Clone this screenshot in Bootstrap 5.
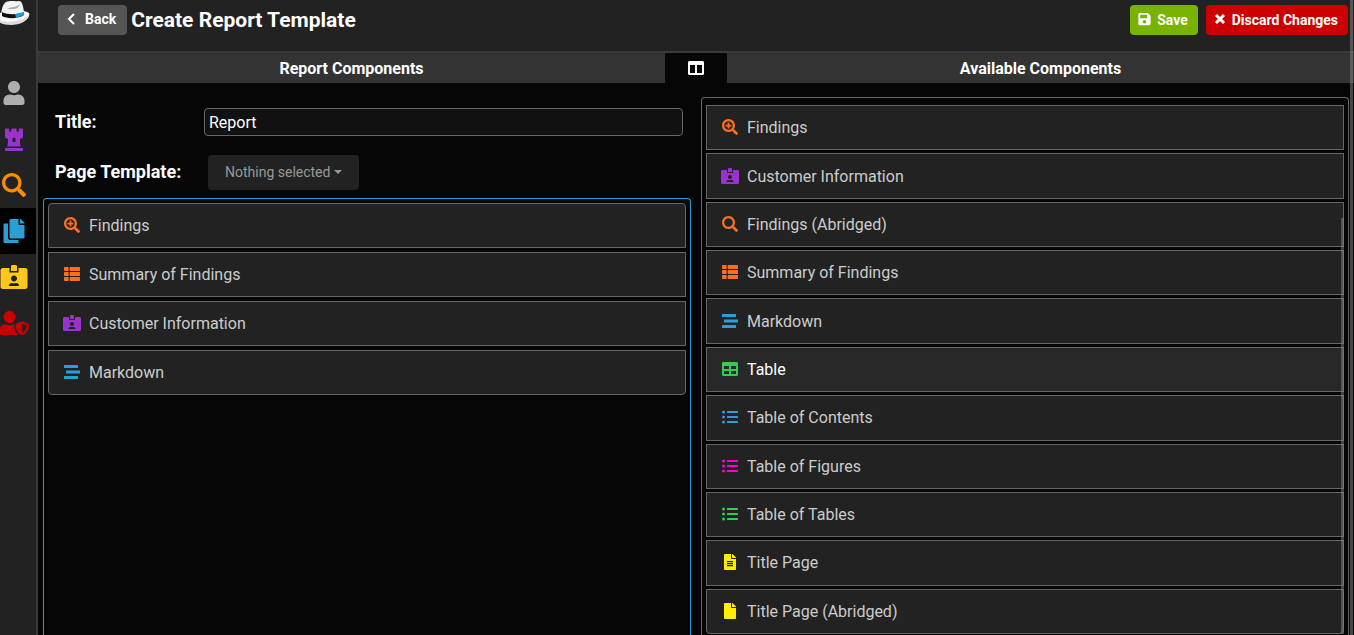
<!DOCTYPE html>
<html lang="en">
<head>
<meta charset="utf-8">
<meta name="viewport" content="width=device-width, initial-scale=1">
<title>Create Report Template</title>
<link href="https://cdn.jsdelivr.net/npm/bootstrap@5.3.0/dist/css/bootstrap.min.css" rel="stylesheet">
<style>
  body { background: #060606; color: #fff; font-family: Roboto, "Liberation Sans", sans-serif; font-size: 16px; }
  svg { fill: currentColor; display: block; flex: none; }

  .side-menu { width: 38px; background: #222; border-right: 2px solid #3a3a3a; }
  .side-logo { height: 70px; }
  .side-link { height: 46px; padding-left: 0; color: inherit; width: 28px; }
  .side-item.current { background: #000; }

  .page-head { height: 53px; background: #222; border-bottom: 2px solid #3a3a3a; padding: 5px 6px 0 20px; }
  .page-head .btn { height: 30px; padding: 0 10px; font-size: 14px; font-weight: 700; color: #fff; border: 0; border-radius: 4px; }
  .page-head .btn-back { background: #555; padding: 0 11px 2px 8px; gap: 10px; }
  .btn-save { background: #77b300; }
  .page-head .btn-save { padding: 0 10px 0 8px; gap: 6px; }
  .btn-discard { background: #c00; }
  .page-head .btn-save svg, .page-head .btn-discard svg { margin-bottom: 2px; }
  .page-head h1 { font-size: 21px; line-height: 30px; font-weight: 700; }

  .col-tabs { height: 30px; line-height: 30px; }
  .col-tab { background: #333; font-size: 16px; line-height: 32px; font-weight: 700; }
  .layout-toggle { width: 62px; background: transparent; border: 0; color: #fff; }

  .form-line { padding-left: 12px; padding-right: 8px; }
  .form-line label { font-size: 18px; line-height: 28px; font-weight: 700; flex: none; }
  .title-line { padding-top: 25px; }
  .title-line label { width: 149px; }
  .title-input { height: 28px; padding: 0 4px; font-size: 16px; background: #111; color: #fff; border: 1px solid #666; border-radius: 4px; }
  .title-input:focus { background: #111; color: #fff; }
  .template-line { padding-top: 19px; padding-bottom: 8px; }
  .template-line label { width: 153px; padding-bottom: 2px; }
  .btn-template { height: 35px; padding: 0 17px; font-size: 14px; background: #222; color: #999; border: 0; border-radius: 4px; }
  .btn-template::after { margin-left: 4px; vertical-align: 3px; border-top-width: 4px; border-left-width: 4px; border-right-width: 4px; }

  .split { --bs-gutter-x: 10px; }
  .drop-area { border: 1px solid #666; border-bottom: 0; border-radius: 4px 4px 0 0; }
  .drop-report { border-color: #2a9fd6; padding: 4px; }
  .drop-available { margin-top: 14px; padding: 7px 4px 1px; }
  .parts { gap: 4px; }
  .part { min-height: 45px; padding: 0 13px; gap: 7px; background: #222; color: #ccc; border: 1px solid #666; cursor: move; }
  .part svg { margin-bottom: 2px; }
  .parts-report .part:first-child { border-radius: 4px 4px 0 0; }
  .part:last-child { border-radius: 0 0 4px 4px; }
  .parts-available { gap: 3px; }
  .parts-available .part { flex: 1 0 auto; padding-top: 1px; }
  .part.hovered { background: #282828; color: #fff; }

  .c-orange { color: #fd6f20; } .c-purple { color: #93c; } .c-blue { color: #2a9fd6; }
  .c-green { color: #3c5; } .c-pink { color: #f0c; } .c-yellow { color: #fe0; }
  .c-user { color: #adafae; } .c-search { color: #ff8c00; } .c-card { color: #ffc61c; } .c-red { color: #c00; }

  .thumb { background: #888; opacity: .5; width: 3px; pointer-events: none; }
  .thumb-page { top: 0; right: 1px; height: 100%; }
  .thumb-list { top: 120px; right: 4px; bottom: 1px; }
</style>
</head>
<body>
<svg class="d-none" aria-hidden="true">
  <symbol id="user" viewBox="0 0 448 512"><path d="M224 256c70.700 0 128-57.300 128-128S294.700 0 224 0 96 57.300 96 128s57.300 128 128 128zm89.600 32h-16.700c-22.200 10.200-46.900 16-72.900 16s-50.600-5.800-72.900-16h-16.700C60.200 288 0 348.200 0 422.400V464c0 26.500 21.500 48 48 48h352c26.500 0 48-21.500 48-48v-41.600c0-74.200-60.200-134.400-134.400-134.400z"/></symbol>
  <symbol id="rook" viewBox="0 0 384 512"><path d="M368 32h-56a16 16 0 0 0-16 16v48h-48V48a16 16 0 0 0-16-16h-80a16 16 0 0 0-16 16v48H88.100V48a16 16 0 0 0-16-16H16A16 16 0 0 0 0 48v176l64 32c0 48.330-1.540 95-13.210 160h282.420C321.540 351 320 303.720 320 256l64-32V48a16 16 0 0 0-16-16zM224 320h-64v-64a32 32 0 0 1 64 0zm144 128H16a16 16 0 0 0-16 16v32a16 16 0 0 0 16 16h352a16 16 0 0 0 16-16v-32a16 16 0 0 0-16-16z"/></symbol>
  <symbol id="search" viewBox="0 0 512 512"><path d="M505 442.700L405.300 343c-4.500-4.500-10.600-7-17-7H372c27.600-35.300 44-79.700 44-128C416 93.100 322.900 0 208 0S0 93.100 0 208s93.100 208 208 208c48.300 0 92.700-16.400 128-44v16.300c0 6.400 2.500 12.500 7 17l99.700 99.700c9.400 9.400 24.600 9.400 33.900 0l28.300-28.300c9.400-9.400 9.400-24.600.1-34zM208 346c-76 0-138-62-138-138S132 70 208 70s138 62 138 138-62 138-138 138z"/></symbol>
  <symbol id="search-plus" viewBox="0 0 512 512"><path d="M304 192v32c0 6.600-5.400 12-12 12h-56v56c0 6.600-5.400 12-12 12h-32c-6.600 0-12-5.400-12-12v-56h-56c-6.600 0-12-5.400-12-12v-32c0-6.600 5.400-12 12-12h56v-56c0-6.600 5.400-12 12-12h32c6.600 0 12 5.400 12 12v56h56c6.600 0 12 5.400 12 12zm201 284.700L476.700 505c-9.400 9.400-24.600 9.400-33.900 0L343 405.300c-4.500-4.500-7-10.600-7-17V372c-35.300 27.600-79.700 44-128 44C93.100 416 0 322.900 0 208S93.100 0 208 0s208 93.100 208 208c0 48.300-16.400 92.700-44 128h16.300c6.400 0 12.500 2.500 17 7l99.700 99.700c9.300 9.400 9.300 24.600 0 34zM344 208c0-75.200-60.800-136-136-136S72 132.800 72 208s60.800 136 136 136 136-60.800 136-136z"/></symbol>
  <symbol id="copy" viewBox="0 0 448 512"><path d="M320 448v40c0 13-11 24-24 24H24c-13 0-24-11-24-24V120c0-13 11-24 24-24h72v296c0 31 25 56 56 56h168zm0-344V0H152c-13 0-24 11-24 24v368c0 13 11 24 24 24h272c13 0 24-11 24-24V128H344c-13 0-24-11-24-24zm121-31L375 7a24 24 0 0 0-17-7h-6v96h96v-6a24 24 0 0 0-7-17z"/></symbol>
  <symbol id="card-id" viewBox="0 0 576 512"><path d="M528 64H384v96H192V64H48C21.500 64 0 85.500 0 112v352c0 26.500 21.500 48 48 48h480c26.500 0 48-21.500 48-48V112c0-26.500-21.500-48-48-48zM288 224c35.300 0 64 28.700 64 64s-28.700 64-64 64-64-28.700-64-64 28.700-64 64-64zm93.300 224H194.700c-10.400 0-18.800-10-15.600-19.800 8.300-25.600 32.400-44.200 60.900-44.200h8.200c12.300 5.100 25.700 8 39.800 8s27.600-2.900 39.800-8h8.200c28.400 0 52.500 18.500 60.900 44.200 3.200 9.900-5.200 19.800-15.600 19.800zM352 32c0-17.700-14.300-32-32-32h-64c-17.700 0-32 14.300-32 32v96h128V32z"/></symbol>
  <symbol id="user-shield" viewBox="0 0 640 512"><path d="M622.300 271.100l-115.200-45c-4.100-1.600-12.600-3.700-22.200 0l-115.200 45c-10.700 4.200-17.700 14-17.700 24.900 0 111.600 68.700 188.800 132.900 213.900 9.600 3.700 18 1.600 22.200 0C558.400 489.900 640 420.500 640 296c0-10.900-7-20.700-17.700-24.900zM496 462.400V273.300l95.500 37.300c-5.600 87.100-60.900 135.400-95.500 151.800zM224 256c70.700 0 128-57.300 128-128S294.700 0 224 0 96 57.300 96 128s57.300 128 128 128zm96 40c0-2.500.8-4.800 1.100-7.200-2.500-.1-4.900-.8-7.500-.8h-16.700c-22.200 10.200-46.900 16-72.900 16s-50.600-5.800-72.900-16h-16.700C60.200 288 0 348.200 0 422.400V464c0 26.500 21.500 48 48 48h352c6.800 0 13.300-1.500 19.200-4-54-42.900-99.200-116.700-99.200-212z"/></symbol>
  <symbol id="save" viewBox="0 0 448 512"><path d="M434 130l-84-84A48 48 0 0 0 316 32H48C21.500 32 0 53.500 0 80v352c0 26.500 21.500 48 48 48h352c26.500 0 48-21.500 48-48V164a48 48 0 0 0-14-34zM224 416c-35 0-64-29-64-64s29-64 64-64 64 29 64 64-29 64-64 64zm96-304v100c0 7-5 12-12 12H76c-7 0-12-5-12-12V108c0-7 5-12 12-12h228c4 0 7 1 9 3l3 4c3 2 4 5 4 9z"/></symbol>
  <symbol id="th-list" viewBox="0 0 512 512"><path d="M24 32h101c13 0 24 11 24 24v80c0 13-11 24-24 24H24c-13 0-24-11-24-24V56c0-13 11-24 24-24zm181 0h283c13 0 24 11 24 24v80c0 13-11 24-24 24H205c-13 0-24-11-24-24V56c0-13 11-24 24-24zM24 192h101c13 0 24 11 24 24v80c0 13-11 24-24 24H24c-13 0-24-11-24-24v-80c0-13 11-24 24-24zm181 0h283c13 0 24 11 24 24v80c0 13-11 24-24 24H205c-13 0-24-11-24-24v-80c0-13 11-24 24-24zM24 352h101c13 0 24 11 24 24v80c0 13-11 24-24 24H24c-13 0-24-11-24-24v-80c0-13 11-24 24-24zm181 0h283c13 0 24 11 24 24v80c0 13-11 24-24 24H205c-13 0-24-11-24-24v-80c0-13 11-24 24-24z"/></symbol>
  <symbol id="stream" viewBox="0 0 512 512"><rect y="32" width="448" height="96" rx="16"/><rect x="64" y="208" width="448" height="96" rx="16"/><rect y="384" width="448" height="96" rx="16"/></symbol>
  <symbol id="grid-table" viewBox="0 0 512 512"><path fill-rule="evenodd" d="M48 32h416c26 0 48 22 48 48v352c0 26-22 48-48 48H48c-26 0-48-22-48-48V80c0-26 22-48 48-48zm16 128v96h160v-96zm224 0v96h160v-96zM64 320v96h160v-96zm224 0v96h160v-96z"/></symbol>
  <symbol id="list-ul" viewBox="0 0 512 512"><circle cx="48" cy="96" r="48"/><circle cx="48" cy="256" r="48"/><circle cx="48" cy="416" r="48"/><rect x="160" y="64" width="352" height="64" rx="16"/><rect x="160" y="224" width="352" height="64" rx="16"/><rect x="160" y="384" width="352" height="64" rx="16"/></symbol>
  <symbol id="file" viewBox="0 0 384 512"><path d="M224 136V0H24C10.700 0 0 10.700 0 24v464c0 13.300 10.700 24 24 24h336c13.300 0 24-10.700 24-24V160H248c-13.200 0-24-10.800-24-24zm160-14v6H256V0h6c6.400 0 12.500 2.500 17 7l98 98c4.500 4.500 7 10.600 7 17z"/></symbol>
  <symbol id="file-alt" viewBox="0 0 384 512"><path fill-rule="evenodd" d="M224 136V0H24C10.700 0 0 10.700 0 24v464c0 13.300 10.700 24 24 24h336c13.300 0 24-10.700 24-24V160H248c-13.200 0-24-10.800-24-24zM96 224h192v36H96zm0 64h192v36H96zm0 64h192v36H96zM384 122v6H256V0h6c6.400 0 12.500 2.500 17 7l98 98c4.500 4.500 7 10.600 7 17z"/></symbol>
</svg>

<div class="d-flex vh-100 overflow-hidden position-relative">
  <nav class="side-menu flex-shrink-0 overflow-hidden" aria-label="Main">
    <a href="#" class="side-logo d-block" aria-label="Home">
      <svg width="30" height="25" viewBox="0 0 30 25">
        <path d="M-4 15c3-4 28-6 33-2 2 5-6 11-18 11-7 0-13-3-15-9z" fill="#fafafa"/>
        <path d="M-4 19c7 4 24 4 33-4-1 6-9 10-18 10-7 0-13-2-15-6z" fill="#dcdcdc"/>
        <path d="M1 14c1-6 2-10 5-12 5-2 9 0 13-1 3 0 4 4 5 11-5 6-17 7-23 2z" fill="#f4f4f4"/>
        <path d="M7 9c5-3 9-1 13-5-2 6-7 5-13 5z" fill="#aaa"/>
        <path d="M2 12c5 3 16 3 22 0v3c-6 4-17 4-22 1z" fill="#111"/>
        <path d="M15 14l9-2v3l-8 3z" fill="#1e9bea"/>
      </svg>
    </a>
    <ul class="list-unstyled mb-0">
      <li class="side-item"><a href="#" class="side-link c-user d-flex align-items-center justify-content-center" aria-label="Users"><svg width="22" height="24"><use href="#user"/></svg></a></li>
      <li class="side-item"><a href="#" class="side-link c-purple d-flex align-items-center justify-content-center" aria-label="Engagements"><svg width="24" height="24"><use href="#rook"/></svg></a></li>
      <li class="side-item"><a href="#" class="side-link c-search d-flex align-items-center justify-content-center" aria-label="Findings"><svg width="24" height="24"><use href="#search"/></svg></a></li>
      <li class="side-item current"><a href="#" class="side-link c-blue d-flex align-items-center justify-content-center" aria-label="Reports" aria-current="page"><svg width="22" height="24"><use href="#copy"/></svg></a></li>
      <li class="side-item"><a href="#" class="side-link c-card d-flex align-items-center justify-content-center" aria-label="Customers"><svg width="28" height="24"><use href="#card-id"/></svg></a></li>
      <li class="side-item"><a href="#" class="side-link c-red d-flex align-items-center justify-content-center" aria-label="Administration"><svg width="30" height="24"><use href="#user-shield"/></svg></a></li>
    </ul>
  </nav>

  <main class="d-flex flex-column flex-grow-1">
    <header class="page-head d-flex align-items-start flex-shrink-0">
      <button type="button" class="btn btn-back d-flex align-items-center"><svg width="9" height="14" viewBox="0 0 9 14"><path d="M8 2L3 7l5 5" fill="none" stroke="currentColor" stroke-width="2"/></svg>Back</button>
      <h1 class="mb-0 ms-1 text-nowrap">Create Report Template</h1>
      <div class="d-flex gap-2 ms-auto">
        <button type="button" class="btn btn-save d-flex align-items-center"><svg width="13" height="14"><use href="#save"/></svg>Save</button>
        <button type="button" class="btn btn-discard d-flex align-items-center text-nowrap"><svg width="8" height="14" viewBox="0 0 8 14" class="me-2 overflow-visible"><path d="M0 3l8 8M8 3l-8 8" stroke="currentColor" stroke-width="3"/></svg>Discard Changes</button>
      </div>
    </header>

    <div class="col-tabs d-flex flex-shrink-0">
      <div class="col-tab flex-fill w-50 text-center overflow-hidden">Report Components</div>
      <button type="button" class="layout-toggle flex-shrink-0 d-flex align-items-center justify-content-center p-0" aria-label="Toggle columns"><svg width="16" height="16" viewBox="0 0 16 16"><path fill-rule="evenodd" d="M1 1h14l1 1v12l-1 1H1l-1-1V2zm1 4v8h5V5zm7 0v8h5V5z"/></svg></button>
      <div class="col-tab flex-fill w-50 text-center overflow-hidden">Available Components</div>
    </div>

    <div class="split row m-0 flex-grow-1">
      <section class="col-6 d-flex flex-column">
        <div class="form-line title-line d-flex align-items-center">
          <label for="title">Title:</label>
          <input id="title" type="text" class="title-input form-control flex-fill" value="Report">
        </div>
        <div class="form-line template-line d-flex align-items-center">
          <label for="template">Page Template:</label>
          <button id="template" type="button" class="btn btn-template dropdown-toggle" data-bs-toggle="dropdown">Nothing selected</button>
        </div>
        <div class="drop-area drop-report flex-grow-1">
          <ul class="parts parts-report list-unstyled d-flex flex-column mb-0">
            <li class="part d-flex align-items-center"><svg class="c-orange" width="20" height="16"><use href="#search-plus"/></svg>Findings</li>
            <li class="part d-flex align-items-center"><svg class="c-orange" width="20" height="16"><use href="#th-list"/></svg>Summary of Findings</li>
            <li class="part d-flex align-items-center"><svg class="c-purple" width="20" height="16"><use href="#card-id"/></svg>Customer Information</li>
            <li class="part d-flex align-items-center"><svg class="c-blue" width="20" height="16"><use href="#stream"/></svg>Markdown</li>
          </ul>
        </div>
      </section>

      <section class="col-6 d-flex flex-column">
        <div class="drop-area drop-available flex-grow-1 d-flex flex-column position-relative">
          <ul class="parts parts-available list-unstyled d-flex flex-column flex-grow-1 mb-0">
            <li class="part d-flex align-items-center"><svg class="c-orange" width="20" height="16"><use href="#search-plus"/></svg>Findings</li>
            <li class="part d-flex align-items-center"><svg class="c-purple" width="20" height="16"><use href="#card-id"/></svg>Customer Information</li>
            <li class="part d-flex align-items-center"><svg class="c-orange" width="20" height="16"><use href="#search"/></svg>Findings (Abridged)</li>
            <li class="part d-flex align-items-center"><svg class="c-orange" width="20" height="16"><use href="#th-list"/></svg>Summary of Findings</li>
            <li class="part d-flex align-items-center"><svg class="c-blue" width="20" height="16"><use href="#stream"/></svg>Markdown</li>
            <li class="part hovered d-flex align-items-center"><svg class="c-green" width="20" height="16"><use href="#grid-table"/></svg>Table</li>
            <li class="part d-flex align-items-center"><svg class="c-blue" width="20" height="16"><use href="#list-ul"/></svg>Table of Contents</li>
            <li class="part d-flex align-items-center"><svg class="c-pink" width="20" height="16"><use href="#list-ul"/></svg>Table of Figures</li>
            <li class="part d-flex align-items-center"><svg class="c-green" width="20" height="16"><use href="#list-ul"/></svg>Table of Tables</li>
            <li class="part d-flex align-items-center"><svg class="c-yellow" width="20" height="16"><use href="#file-alt"/></svg>Title Page</li>
            <li class="part d-flex align-items-center"><svg class="c-yellow" width="20" height="16"><use href="#file"/></svg>Title Page (Abridged)</li>
          </ul>
          <div class="thumb thumb-list position-absolute"></div>
        </div>
      </section>
    </div>
  </main>
  <div class="thumb thumb-page position-absolute"></div>
</div>
<script src="https://cdn.jsdelivr.net/npm/bootstrap@5.3.0/dist/js/bootstrap.bundle.min.js"></script>
</body>
</html>
